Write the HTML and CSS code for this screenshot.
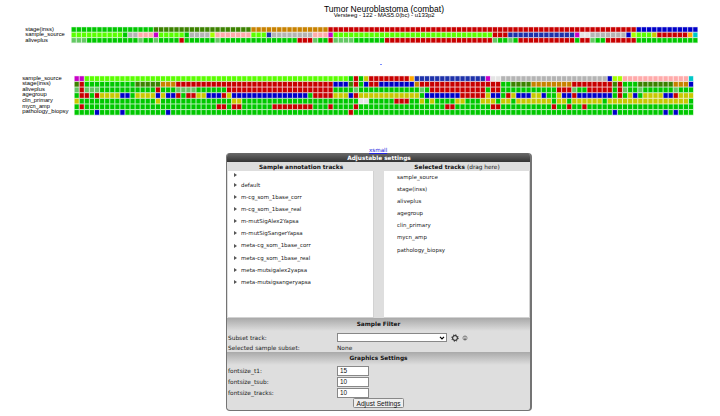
FILE: index.html
```html
<!DOCTYPE html>
<html lang="en">
<head>
<meta charset="utf-8">
<title>Tumor Neuroblastoma (combat)</title>
<link rel="stylesheet" href="styles.css">
</head>
<body>
<header class="chart-title">
  <svg width="720" height="20" viewBox="0 0 720 20">
    <text class="title" x="324" y="11.7" textLength="120" lengthAdjust="spacingAndGlyphs">Tumor Neuroblastoma (combat)</text>
    <text class="subtitle" x="333.7" y="17.3" textLength="101" lengthAdjust="spacingAndGlyphs">Versteeg - 122 - MAS5.0(bc) - u133p2</text>
  </svg>
</header>
<svg class="tracks tracks-top" id="top" width="720" height="24"></svg>
<div class="marker"></div>
<svg class="tracks tracks-bottom" id="bottom" width="720" height="44"></svg>
<div class="size-link"><a href="#">xsmall</a></div>
<main class="panel">
  <h1 class="panel-title">Adjustable settings</h1>
  <div class="columns">
    <section>
      <h2>Sample annotation tracks</h2>
      <ul class="list tree">
        <li class="blank"></li>
        <li>default</li>
        <li>m-cg_som_1base_corr</li>
        <li>m-cg_som_1base_real</li>
        <li>m-mutSigAlex2Yapsa</li>
        <li>m-mutSigSangerYapsa</li>
        <li>meta-cg_som_1base_corr</li>
        <li>meta-cg_som_1base_real</li>
        <li>meta-mutsigalex2yapsa</li>
        <li>meta-mutsigsangeryapsa</li>
      </ul>
    </section>
    <section>
      <h2>Selected tracks <span>(drag here)</span></h2>
      <ul class="list selected">
        <li>sample_source</li>
        <li>stage(inss)</li>
        <li>aliveplus</li>
        <li>agegroup</li>
        <li>clin_primary</li>
        <li>mycn_amp</li>
        <li>pathology_biopsy</li>
      </ul>
    </section>
  </div>
  <section class="group filter">
    <h2>Sample Filter</h2>
    <div class="row"><span class="label">Subset track:</span>
      <span class="select"><svg width="6" height="4" viewBox="0 0 6 4"><path d="M1 .8 3 2.9 5 .8" fill="none" stroke="#000" stroke-width="1.2"/></svg></span>
      <svg class="gear" width="8" height="8" viewBox="0 0 8 8"><circle cx="4" cy="4" r="2.4" fill="none" stroke="#111" stroke-width="1"/><circle cx="4" cy="4" r="3.2" fill="none" stroke="#111" stroke-width=".9" stroke-dasharray="1.2 1.313"/></svg>
      <svg class="info" width="6" height="6" viewBox="0 0 6 6"><circle cx="3" cy="3" r="2.1" fill="none" stroke="#555" stroke-width=".6"/><path d="M3 1.3v.7M3 2.5v2M2.3 4.4h1.4" stroke="#333" stroke-width=".7"/></svg>
    </div>
    <div class="row result"><span class="label">Selected sample subset:</span><span>None</span></div>
  </section>
  <section class="group graphics">
    <h2>Graphics Settings</h2>
    <div class="row"><span class="label">fontsize_t1:</span><span class="input">15</span></div>
    <div class="row"><span class="label">fontsize_tsub:</span><span class="input">10</span></div>
    <div class="row"><span class="label">fontsize_tracks:</span><span class="input">10</span></div>
    <button class="apply">Adjust Settings</button>
  </section>
</main>
<script src="tracks.js"></script>
</body>
</html>
```
FILE: styles.css
```css
* { box-sizing: border-box; }
body { margin: 0; width: 720px; height: 416px; overflow: hidden; background: #fff; color: #1a1a1a; font-family: "DejaVu Sans", Verdana, sans-serif; font-size: 5.85px; }
h1, h2, ul { margin: 0; padding: 0; list-style: none; font-size: 5.8px; }
svg { display: block; overflow: visible; }
.chart-title { height: 26px; }
.title { font: 8.8px "Liberation Sans", Arial, sans-serif; }
.subtitle { font: 5.7px "Liberation Sans", Arial, sans-serif; }
.track-label { font: 5.9px "Liberation Sans", Arial, sans-serif; fill: #000; }
.marker { width: 2px; height: 1px; margin: 14px 0 10px 380px; background: #7b8dff; }
.size-link { height: 6px; margin: 28px 0 0 369px; font-size: 5.6px; line-height: 6px; }
.size-link a { color: #22d; }
.panel { width: 306px; height: 258px; margin-left: 226px; border: solid #747474; border-width: 0 2px 1px 1px; border-radius: 4px; background: #dedede; overflow: hidden; }
.panel-title { height: 9px; background: linear-gradient(#6a6a6a, #333); color: #fff; text-align: center; line-height: 10px; padding-left: 1px; }
.columns { display: grid; grid-template-columns: 146px 146px; gap: 10px; padding-left: 1px; }
.columns h2 { height: 9px; text-align: center; line-height: 11px; color: #111; white-space: nowrap; }
.columns h2 span { font-weight: normal; }
.list { height: 147px; background: #fff; border: 1px solid #d2d2d2; border-width: 0 1px 1px 0; font-size: 5.48px; }
.list li { height: 12.1px; line-height: 12.1px; white-space: nowrap; }
.tree li { display: flex; align-items: center; }
.tree li::before { content: ""; border: 2.2px solid transparent; border-left: 3px solid #555; border-right: 0; margin: 0 4px 0 6px; }
.tree .blank { height: 8px; }
.selected { padding: 0 0 0 13px; }
.group { background: linear-gradient(#a9a9a9, #dedede 13px); }
.group h2 { height: 13px; line-height: 13px; text-align: center; color: #111; }
.filter { height: 34px; }
.row { display: flex; height: 11px; align-items: center; }
.label { width: 110px; padding-left: 1px; }
.filter .row { height: 13px; }
.filter .result { height: 8px; }
.select { display: flex; align-items: center; justify-content: flex-end; width: 110px; height: 9px; background: #fff; border: 1px solid #888; padding-right: 1px; }
.gear { margin-left: 4px; }
.info { margin-left: 3px; }
.input { width: 32px; height: 10px; background: #fff; border: 1px solid #888; font: 6.4px/8px "Liberation Sans", Arial, sans-serif; padding-left: 2px; color: #111; }
.apply { display: block; width: 51px; height: 10px; margin: 0 0 0 126px; padding: 0; background: #efefef; border: 1px solid #888; border-radius: 1.5px; font: 6.6px/9px "Liberation Sans", Arial, sans-serif; color: #111; white-space: nowrap; }
```
FILE: tracks.js
```js
const colours = {
  G: "#00c800", D: "#3c8200", O: "#c88200", R: "#c80000", B: "#0000c8",
  L: "#5aff00", S: "#b4b4b4", P: "#ffaaaa", M: "#c800c8", N: "#1e32aa",
  W: "#e4e4e4", A: "#a5ff00", Y: "#c8c800", F: "#ffaa00", C: "#00c8c8",
  E: "#64c864"
};

// Each track is a run-length list: colour code followed by its cell count.
const topTracks = [
  ["stage(inss)", "G16 D19 O15 R60 B12"],
  ["sample_source", "L10 G1 S2 P3 M1 L5 G1 S4 A1 P7 L3 N1 S8 P3 M1 L31 R3 N13 M1 W2 S7 B1 A1 L3 Y1 R6 F1 C1"],
  ["aliveplus", "E3 G10 E1 G2 E1 G4 R1 G6 E1 G15 R3 E1 G2 R1 E4 G6 R21 E1 G2 E1 G1 R11 G1 R2 E1 G2 R6 G12"]
];
const bottomTracks = [
  ["sample_source", "M2 L52 G1 R1 G1 Y1 R8 F1 N14 M1 W2 S21 B1 A2 P13 C1"],
  ["stage(inss)", "D1 R1 G10 D5 O3 R31 B3 D1 R1 G1 B1 R2 B7 O1 R16 G2 D4 O8 R8 D1 R1 G3 D7 O3 B1"],
  ["aliveplus", "E1 R1 E3 G11 R1 G3 E4 G6 R21 G4 E1 G12 E1 G1 R11 G1 R2 G11 R3 E1 G2 R5 G1 R1 E1 G2 E1 G6 E1 G3"],
  ["agegroup", "G1 R2 G1 R1 Y4 B2 G1 Y4 B1 Y1 B2 R1 G1 R2 Y2 B3 R1 Y1 B15 G1 R4 Y3 B1 R1 Y12 G1 B7 R5 Y1 B2 G1 R1 Y1 B3 Y2 B1 G2 Y1 B2 R1 B7 G1 R1 G1 Y1 B1 G1 Y4 B2 R1 Y3"],
  ["clin_primary", "Y1 G15 Y1 G14 Y2 G23 W2 G5 R3 G2 Y1 G1 Y1 G4 Y2 G3 Y3 G1 Y2 G1 Y7 G1 Y2 G1 Y6 G1 Y16 G1"],
  ["mycn_amp", "G1 R1 G26 R2 G1 R2 G6 R8 G3 R1 G4 R1 G17 R2 G7 R2 G10 R1 G2 R1 G2 R1 G21"],
  ["pathology_biopsy", "G4 B1 G4 B1 G8 B1 G35 R1 G51 B1 G9 B1 G1 B1 G3"]
];
const widths = {
  "stage(inss)": 28.6, "sample_source": 39.5, "aliveplus": 22.6, "agegroup": 24.6,
  "clin_primary": 30.6, "mycn_amp": 27.8, "pathology_biopsy": 46.4
};

function draw(id, tracks, labelX, x0, y0, pitchX, pitchY, firstBaseline) {
  let out = "";
  tracks.forEach(([name, runs], r) => {
    const y = y0 + r * pitchY;
    out += `<text class="track-label" x="${labelX}" y="${firstBaseline + r * pitchY}" textLength="${widths[name]}" lengthAdjust="spacingAndGlyphs">${name}</text>`;
    let i = 0;
    runs.split(" ").forEach(run => {
      const fill = colours[run[0]];
      const n = Number(run.slice(1));
      out += `<rect x="${x0 + i * pitchX}" y="${y}" width="${n * pitchX}" height="${pitchY}" fill="${fill}" opacity=".3"/>`;
      for (let k = 0; k < n; k++, i++) {
        out += `<rect x="${x0 + i * pitchX + 0.5}" y="${y + 0.4}" width="${pitchX - 1.05}" height="${pitchY - 1}" fill="${fill}"/>`;
      }
    });
  });
  document.getElementById(id).innerHTML = out;
}

draw("top", topTracks, 25.3, 71.2, 0.9, 5.137, 5.4, 4.8);
draw("bottom", bottomTracks, 22.2, 74.2, 0.9, 5.077, 5.63, 4.5);
```
